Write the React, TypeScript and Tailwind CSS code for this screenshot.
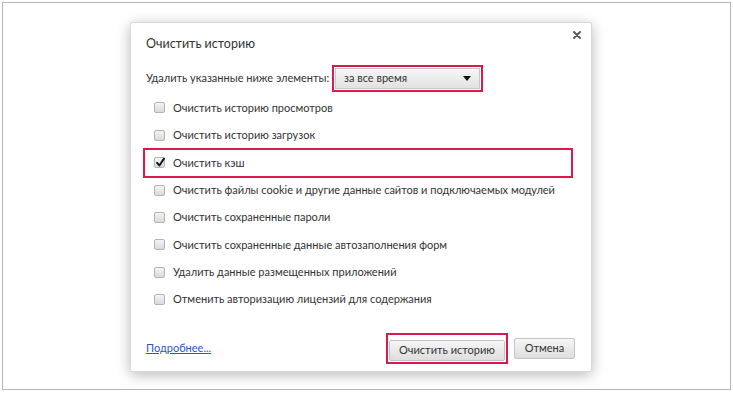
const items: { label: string; checked?: boolean; highlight?: boolean }[] = [
  { label: "Очистить историю просмотров" },
  { label: "Очистить историю загрузок" },
  { label: "Очистить кэш", checked: true, highlight: true },
  { label: "Очистить файлы cookie и другие данные сайтов и подключаемых модулей" },
  { label: "Очистить сохраненные пароли" },
  { label: "Очистить сохраненные данные автозаполнения форм" },
  { label: "Удалить данные размещенных приложений" },
  { label: "Отменить авторизацию лицензий для содержания" },
];

function Checkbox({ checked }: { checked?: boolean }) {
  return (
    <span className="relative flex h-[11px] w-[11px] shrink-0 items-center justify-center rounded-[2px] border border-[#b3b3b3] bg-gradient-to-b from-[#f4f4f4] to-[#dadada]">
      {checked && (
        <svg viewBox="0 0 12 12" className="absolute -top-[1px] left-[0px] h-[11px] w-[11px]">
          <path d="M2.2 6.4 L4.8 9.2 L9.8 1.8" fill="none" stroke="#111" strokeWidth="2.1" strokeLinecap="round" strokeLinejoin="round" />
        </svg>
      )}
    </span>
  );
}

export default function App() {
  return (
    <div
      className="h-[393px] w-[733px] bg-white pl-[2px] pt-[2px] text-[#333]"
      style={{ fontFamily: 'Lato, "Open Sans", sans-serif' }}
    >
      <div className="h-[388px] w-[729px] border border-[#b5b5b5] pl-[127px] pt-[19px]">
        <div className="relative flex h-[350px] w-[462px] flex-col rounded-[2px] border border-[#d8d8d8] bg-white pl-[15px] pr-[16px] pt-[11px] shadow-[0_3px_14px_rgba(0,0,0,0.28)]">
          <button className="absolute right-[10px] top-[8px]">
            <svg viewBox="0 0 8 8" className="h-[8px] w-[8px]">
              <path d="M1 1 L7 7 M7 1 L1 7" stroke="#555" strokeWidth="1.8" strokeLinecap="round" />
            </svg>
          </button>

          <div className="h-[20px] text-[12.5px] leading-[20px] text-[#333]">Очистить историю</div>

          <div className="mt-[11px] flex h-[27px] items-center text-[11px]">
            <span className="whitespace-nowrap">Удалить указанные ниже элементы:</span>
            <div className="ml-auto mr-[92px] border-2 border-[#d91a4d] p-[1px]">
              <div className="flex h-[21px] w-[145px] items-center justify-between border border-[#c8c8c8] bg-gradient-to-b from-[#f6f6f6] to-[#e2e2e2] pl-[8px] pr-[8px]">
                <span className="text-[11px] text-[#333]">за все время</span>
                <svg viewBox="0 0 8 5" className="h-[5px] w-[8px]">
                  <path d="M0 0 H8 L4 5 Z" fill="#111" />
                </svg>
              </div>
            </div>
          </div>

          <div className="mt-[2.3px] flex flex-col">
            {items.map((it) => (
              <div key={it.label} className="relative flex h-[27.4px] items-center pl-[8px] text-[11px]">
                {it.highlight && (
                  <span className="pointer-events-none absolute -left-[3px] -top-[1.5px] h-[30px] w-[430px] border-2 border-[#d91a4d]" />
                )}
                <Checkbox checked={it.checked} />
                <span className="ml-[8px] whitespace-nowrap">{it.label}</span>
              </div>
            ))}
          </div>

          <div className="mt-[21.5px] flex h-[27px] items-center">
            <a href="#" className="text-[11px] text-[#2a57c4] underline">Подробнее...</a>
            <div className="ml-auto flex items-center gap-[6px]">
              <div className="border-2 border-[#d91a4d] p-[1px]">
                <button className="h-[21px] w-[116px] rounded-[2px] border border-[#c4c4c4] bg-gradient-to-b from-[#f6f6f6] to-[#dedede] text-[11px] text-[#333]">
                  Очистить историю
                </button>
              </div>
              <button className="h-[21px] w-[61px] rounded-[2px] border border-[#c4c4c4] bg-gradient-to-b from-[#f6f6f6] to-[#dedede] text-[11px] text-[#333]">
                Отмена
              </button>
            </div>
          </div>
        </div>
      </div>
    </div>
  );
}
